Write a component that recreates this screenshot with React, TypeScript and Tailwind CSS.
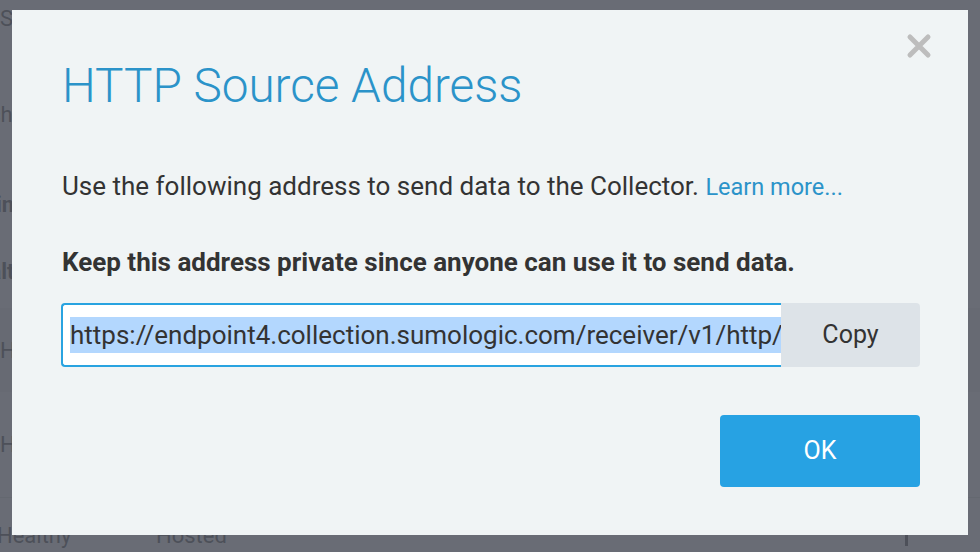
export default function App() {
  return (
    <div className="relative w-[980px] h-[552px] overflow-hidden bg-[#f7f8fa]" style={{ fontFamily: "Roboto, 'Noto Sans', sans-serif" }}>
      {/* background page */}
      <div className="absolute inset-0 text-[22px] text-[#3c3f47]">
        <div className="h-[54px] flex items-start pt-[2px] gap-0">
          <span className="w-[255px]">Status</span>
          <span className="w-[170px]">Input Bytes</span>
          <span className="w-[170px]">Archive</span>
          <span>Data Archiving</span>
        </div>
        <div className="h-[120px] flex items-center"><span className="-ml-[24px]">Scheduled</span></div>
        <div className="h-[60px] flex items-center font-bold"><span className="-ml-[18px]">Kind</span></div>
        <div className="h-[74px] flex items-center font-bold"><span className="-ml-[38px]">Health</span></div>
        <div className="h-[84px] flex items-center bg-[#e8eaee]"><span>Healthy</span></div>
        <div className="h-[106px] flex items-center border-b border-[#d7dade]"><span>Healthy</span></div>
        <div className="h-[54px] flex items-end gap-0 relative">
          <span className="w-[156px] -ml-[3px]">Healthy</span>
          <span className="ml-[3px]">Hosted</span>
          <span className="absolute left-[905px] bottom-[6px] w-[3px] h-[14px] bg-[#3c3f47]"></span>
        </div>
      </div>
      {/* overlay */}
      <div className="absolute inset-0 bg-[#50535d]/85"></div>
      {/* modal */}
      <div className="absolute left-[12px] top-[10px] w-[956px] h-[525px] bg-[#f0f4f5] pl-[50px] pr-[48px] pt-[52px]">
        <button className="absolute right-[35px] top-[22px] w-[28px] h-[28px] flex items-center justify-center">
          <svg width="26" height="26" viewBox="0 0 26 26">
            <path d="M4 4 L22 22 M22 4 L4 22" stroke="#bdbdbd" strokeWidth="5" strokeLinecap="round" />
          </svg>
        </button>
        <h1 className="text-[47.7px] font-light leading-[48px] text-[#2b93c9]">HTTP Source Address</h1>
        <p className="mt-[61px] text-[26px] leading-[30px] text-[#333333] whitespace-nowrap">
          Use the following address to send data to the Collector.{" "}
          <span className="text-[23.5px] text-[#2b93c9]">Learn more...</span>
        </p>
        <p className="mt-[45px] text-[26px] leading-[30px] font-bold text-[#333333] whitespace-nowrap">
          Keep this address private since anyone can use it to send data.
        </p>
        <div className="mt-[26px] flex h-[64px]">
          <div className="w-[720px] -ml-[1px] border-2 border-r-0 border-[#29a3e0] rounded-l-[4px] bg-white flex items-center pl-[7px] overflow-hidden whitespace-nowrap">
            <span className="bg-[#b3d7fe] text-[26px] leading-[36px] text-[#333333]">https://endpoint4.collection.sumologic.com/receiver/v1/http/ZaVnC4dhaV2h0eVbsFhEH9nUjgpcPvSM0l12fvEy5a</span>
          </div>
          <button className="w-[139px] bg-[#dde3e8] rounded-r-[4px] text-[25px] text-[#333333] flex items-center justify-center">Copy</button>
        </div>
        <div className="mt-[48px] flex justify-end">
          <button className="w-[200px] h-[72px] bg-[#27a2e3] rounded-[4px] text-white text-[25px] flex items-center justify-center">OK</button>
        </div>
      </div>
    </div>
  );
}
